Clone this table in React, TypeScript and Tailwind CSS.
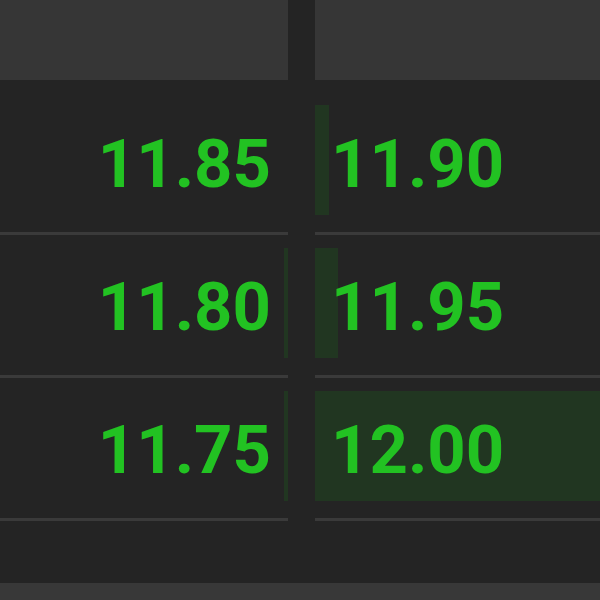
import React from "react";

type Row = { bid: string; ask: string; bidBar: number; askBar: number };

const rows: Row[] = [
  { bid: "11.85", ask: "11.90", bidBar: 0, askBar: 14 },
  { bid: "11.80", ask: "11.95", bidBar: 4, askBar: 23 },
  { bid: "11.75", ask: "12.00", bidBar: 4, askBar: 285 },
];

export default function App() {
  return (
    <div
      className="w-[600px] h-[600px] bg-[#242424] flex flex-col overflow-hidden"
      style={{ fontFamily: "Roboto, 'Liberation Sans', sans-serif" }}
    >
      <div className="flex gap-[27px] h-[80px] shrink-0">
        <div className="w-[288px] bg-[#363636]" />
        <div className="flex-1 bg-[#363636]" />
      </div>
      <div className="mt-[12px] flex flex-col">
        {rows.map((r) => (
          <div key={r.bid} className="flex gap-[27px]">
            <div className="w-[288px] flex flex-col">
              <div className="relative h-[140px] flex items-center justify-end pr-[17px] pt-[5px]">
                {r.bidBar > 0 && (
                  <div
                    className="absolute right-0 top-[13px] h-[110px] bg-[#213621]"
                    style={{ width: r.bidBar }}
                  />
                )}
                <span className="relative text-[67px] leading-none font-bold text-[#22c222]">
                  {r.bid}
                </span>
              </div>
              <div className="h-[3px] bg-[#3a3a3a]" />
            </div>
            <div className="flex-1 flex flex-col">
              <div className="relative h-[140px] flex items-center pl-[16px] pt-[5px]">
                <div
                  className="absolute left-0 top-[13px] h-[110px] bg-[#213621]"
                  style={{ width: r.askBar }}
                />
                <span className="relative text-[67px] leading-none font-bold text-[#22c222]">
                  {r.ask}
                </span>
              </div>
              <div className="h-[3px] bg-[#3a3a3a]" />
            </div>
          </div>
        ))}
      </div>
      <div className="flex-1" />
      <div className="h-[17px] bg-[#383838] shrink-0" />
    </div>
  );
}
